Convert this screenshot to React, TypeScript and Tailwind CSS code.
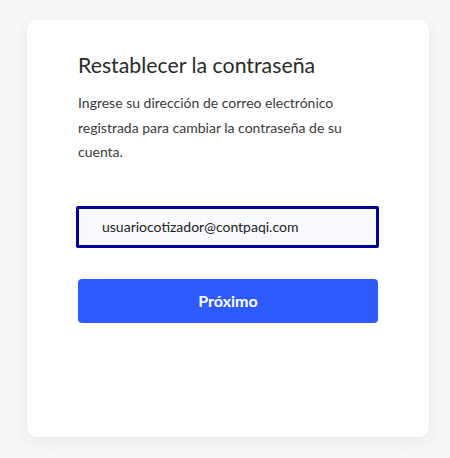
export default function App() {
  return (
    <div className="min-h-[458px] w-full bg-[#f6f7f9] pt-5 px-[27px] font-['Lato','Noto_Sans',sans-serif]">
      <div className="h-[417px] w-[402px] rounded-[10px] bg-white px-[51px] pt-[31px] shadow-[0_4px_16px_rgba(0,0,0,0.06)]">
        <h1 className="text-[21.3px] leading-[28px] text-[#2a2a2a]">Restablecer la contraseña</h1>
        <p className="mt-[12px] text-[14px] leading-[24.5px] text-[#3a3a3a]">
          Ingrese su dirección de correo electrónico registrada para cambiar la contraseña de su cuenta.
        </p>
        <input
          type="email"
          defaultValue="usuariocotizador@contpaqi.com"
          className="mt-[41px] -ml-[2px] block h-[42px] w-[303px] rounded-[2px] border-[3px] border-[#000099] bg-[#f8faff] pl-[23px] text-[14px] text-[#222] outline-none"
        />
        <button className="mt-[31px] block h-[44px] w-[300px] rounded-[4px] bg-[#2d5bff] text-[16px] font-bold text-white">
          Próximo
        </button>
      </div>
    </div>
  );
}
